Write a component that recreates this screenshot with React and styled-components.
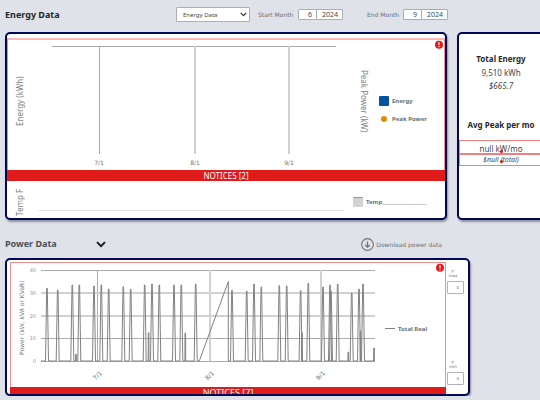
import React from "react";
import styled, { createGlobalStyle } from "styled-components";

const Global = createGlobalStyle`
  * { box-sizing: border-box; }
  body {
    margin: 0;
    background: #dfe2e9;
    color: #6b7075;
    font-family: "Noto Sans", "Open Sans", sans-serif;
    font-size: 8px;
    overflow: hidden;
  }
`;

const Page = styled.main`
  padding-left: 5px;
`;

const Header = styled.header`
  display: flex;
  align-items: center;
  height: ${(p) => (p.$tall ? 38 : 32)}px;
  padding-top: ${(p) => (p.$tall ? 10 : 0)}px;
  padding-bottom: ${(p) => (p.$tall ? 0 : 3)}px;
`;

const Title = styled.h2`
  margin: 0;
  width: ${(p) => p.$width}px;
  font-family: "Noto Sans", sans-serif;
  font-size: 9px;
  line-height: 14px;
  font-weight: 700;
  color: ${(p) => (p.$dark ? "#22272e" : "#4c5156")};
`;

const SelectWrap = styled.span`
  display: flex;
  position: relative;
  margin-right: 8px;

  svg {
    position: absolute;
    right: 3px;
    top: 5px;
    pointer-events: none;
  }
`;

const Select = styled.select`
  appearance: none;
  width: 74px;
  height: 15px;
  padding: 0 6px;
  border: 1px solid #aaaeb6;
  border-radius: 1px;
  background: #fff;
  color: #44484d;
  font: 6px "Noto Sans", sans-serif;
`;

const Field = styled.div`
  display: flex;
  align-items: center;
  margin-right: 24px;
`;

const FieldLabel = styled.label`
  width: ${(p) => p.$width}px;
  font: 6px "DejaVu Sans", sans-serif;
  white-space: nowrap;
`;

const DateInput = styled.input`
  width: ${(p) => (p.$wide ? 27 : 19)}px;
  height: 11px;
  margin-left: ${(p) => (p.$wide ? -1 : 0)}px;
  padding: 0 4px 0 0;
  border: 1px solid #a9adb6;
  border-radius: 1px;
  background: #fff;
  color: #44484d;
  font: 7px "Noto Sans", sans-serif;
  text-align: right;
`;

const CardRow = styled.div`
  display: grid;
  grid-template-columns: minmax(0, 1fr) 88px;
  gap: 10px;
  margin-right: -5px;
`;

const Card = styled.section`
  border: 2px solid #000958;
  border-radius: 5px;
  background: #fff;
  box-shadow: 1px 2px 2px #8f929b;
  overflow: hidden;
`;

const EnergyCard = styled(Card)`
  height: 188px;
  padding-top: 4px;
`;

const PowerCard = styled(Card)`
  display: grid;
  grid-template-columns: minmax(0, 1fr) 22px;
  height: 138px;
  margin-right: 70px;
  padding: 2px 0 0 3px;
`;

const NoticeFrame = styled.div`
  position: relative;
  border: 1px solid #f58c8c;
  border-bottom: 0;
  border-top-width: ${(p) => (p.$thickTop ? 2 : 1)}px;
  border-top-color: ${(p) => (p.$thickTop ? "#fab8b8" : "#f58c8c")};
`;

const Badge = styled.svg`
  position: absolute;
  top: 0;
  right: 1px;
  width: 8px;
  height: 9px;
`;

const NoticeBar = styled.div`
  height: 11px;
  background: #df1b1b;
  margin: 0 -1px;
  color: #fff;
  font-family: "Noto Sans", sans-serif;
  font-size: ${(p) => (p.$large ? 9 : 8)}px;
  line-height: 11px;
  text-align: center;
`;

const EnergyPlot = styled.div`
  display: grid;
  grid-template-columns: 30px minmax(0, 1fr) 34px 66px;
  height: 130px;
`;

const TempPlot = styled(EnergyPlot)`
  height: 37px;
  padding: 0 1px;
`;

const PowerPlot = styled.div`
  display: grid;
  grid-template-columns: 18px minmax(0, 1fr) 66px;
  height: 124px;
`;

const Plot = styled.svg`
  display: block;
  width: 100%;
  height: auto;
  overflow: visible;
  font-family: "DejaVu Sans", sans-serif;
  fill: #6b7075;
`;

const AxisLabel = styled.div`
  display: flex;
  align-items: center;
  justify-content: center;
  writing-mode: vertical-rl;
  transform: ${(p) => (p.$down ? "none" : "rotate(180deg)")};
  padding: ${(p) => p.$pad || "0"};
  font-family: ${(p) => (p.$small ? '"DejaVu Sans"' : '"Noto Sans"')}, sans-serif;
  font-size: ${(p) => (p.$small ? 6 : 8)}px;
  line-height: 12px;
  white-space: nowrap;
  color: #7a7f85;
`;

const Legend = styled.ul`
  display: flex;
  flex-direction: column;
  gap: 7px;
  margin: 0;
  padding: ${(p) => p.$top}px 0 0 ${(p) => p.$left || 0}px;
  list-style: none;
`;

const LegendItem = styled.li`
  display: flex;
  align-items: center;
  gap: 3px;
  height: 11px;
  font: 700 6px "Noto Sans", sans-serif;
  white-space: nowrap;
`;

const Swatch = styled.span`
  flex: none;
  width: ${(p) => (p.$dot ? 6 : 10)}px;
  height: ${(p) => (p.$dot ? 6 : p.$line ? 1 : 10)}px;
  margin: 0 ${(p) => (p.$dot ? 2 : 0)}px 0 ${(p) => (p.$dot ? 2 : 0)}px;
  border-radius: ${(p) => (p.$dot ? 3 : p.$line ? 0 : 1)}px;
  border-top: ${(p) => (p.$edge ? "1px solid #999" : "0")};
  background: ${(p) => p.$color};
`;

const TempLegend = styled(Legend)`
  grid-column: 3 / 5;
`;

const SummaryCard = styled(Card)`
  padding-top: 18px;
  font-family: "Noto Sans", sans-serif;
  text-align: center;
  white-space: nowrap;
`;

const SummaryTitle = styled.h3`
  margin: 0;
  font-size: 8px;
  line-height: 14px;
  font-weight: 700;
  color: #25292d;
`;

const Amount = styled.p`
  margin: 0;
  font-size: 8px;
  line-height: 14px;
  color: #44484d;
`;

const Cost = styled.p`
  margin: 0 0 27px;
  font-size: 8px;
  line-height: 11px;
  font-style: italic;
  color: #44484d;
`;

const ErrorValue = styled.p`
  position: relative;
  height: ${(p) => (p.$italic ? 12 : 14)}px;
  margin: ${(p) => (p.$italic ? 0 : 8)}px 0 0;
  border: 1px solid #f08080;
  color: #44484d;
  font-size: ${(p) => (p.$italic ? 7 : 8)}px;
  font-style: ${(p) => (p.$italic ? "italic" : "normal")};
  line-height: ${(p) => (p.$italic ? 10 : 15)}px;

  &::after {
    content: "";
    position: absolute;
    left: 50%;
    bottom: ${(p) => (p.$italic ? 2 : 0)}px;
    width: 3px;
    height: 3px;
    margin-left: -1px;
    border-radius: 2px;
    background: #e01010;
  }
`;

const ToggleButton = styled.button`
  display: flex;
  padding: 0;
  border: 0;
  background: none;
`;

const DownloadButton = styled.button`
  display: flex;
  align-items: center;
  gap: 2px;
  margin: 0 98px 0 auto;
  padding: 0;
  border: 0;
  background: none;
  color: #6b7075;
  font: 6px "DejaVu Sans", sans-serif;
  white-space: nowrap;
`;

const RangeFields = styled.div`
  display: flex;
  flex-direction: column;
  justify-content: space-between;
  height: 123px;
  padding: 6px 4px 0 1px;
`;

const RangeField = styled.label`
  display: flex;
  flex-direction: column;
  font: 4px "DejaVu Sans", sans-serif;
  line-height: 5px;
  text-align: center;

  span {
    width: 12px;
    margin-bottom: 3px;
  }
`;

const RangeInput = styled.input`
  width: 17px;
  height: 13px;
  padding: 0 4px;
  border: 1px solid #b0b3bb;
  border-radius: 1px;
  color: #6b7075;
  font: 4px "DejaVu Sans", sans-serif;
  text-align: right;
`;

const Chevron = ({ size, color, stroke }) => (
  <svg width={size} height={size * 0.7} viewBox="0 0 10 7" fill="none">
    <path d="M1 1.2 5 5.2 9 1.2" stroke={color} strokeWidth={stroke} />
  </svg>
);

const Alert = () => (
  <Badge viewBox="0 0 8 9">
    <circle cx="4" cy="4.7" r="4" fill="#df1b1b" />
    <path d="M4 2.2v3.1M4 6.2v1.1" stroke="#fff" strokeWidth="1.2" />
  </Badge>
);

// Spikes as [x, peak y]; the ramp between the two groups is an interval with no readings.
const BASE = 98;
const before = [
  [18, 25.3], [28.7, 27], [43.3, 22], [47, 91.3], [50.3, 22], [65, 23],
  [72.3, 22], [79.7, 26], [94.3, 23.7], [101.7, 26.3], [115.7, 22],
  [119.6, 69.7], [123, 21], [130.3, 22], [145, 22], [152.3, 22],
  [156.3, 70], [166.7, 21],
];
const after = [
  [203, 27.3], [217.7, 28], [225, 21], [232.3, 24], [250.3, 22.7],
  [257.7, 23], [271.6, 27.7], [273, 69.7], [279.3, 20.3], [294, 24],
  [301, 22], [302, 28], [308.7, 21], [319.3, 89], [322.7, 30], [330, 26],
  [331.5, 68], [334, 21], [345, 85],
];
const spikes = (points) =>
  points
    .map(([x, y]) => {
      const w = y > 60 ? 0.4 : 1.5;
      return `L${x - w} ${BASE}L${x - 0.3} ${y}L${x + 0.3} ${y}L${x + w} ${BASE}`;
    })
    .join("");
const series = `M12 ${BASE}${spikes(before)}L170.3 ${BASE}L199.3 18.7L199.3 ${BASE}${spikes(after)}`;

const EnergyChart = () => (
  <Plot viewBox="0 0 306 130">
    <path d="M14 6.5H298M61.5 6V114" stroke="#a5a7aa" fill="none" />
    <path d="M157 6V114M251 6V114" stroke="#cfd0d5" strokeWidth="2" />
    <g fontSize="6" textAnchor="middle">
      <text x="61" y="125">7/1</text>
      <text x="157" y="125">8/1</text>
      <text x="251" y="125">9/1</text>
    </g>
  </Plot>
);

const PowerChart = () => (
  <Plot viewBox="0 0 350 124">
    <path d="M12 7.5H346M12 75.5H346M12 98.5H346M68.5 7V98" stroke="#aaacb0" fill="none" />
    <path d="M12 30H346M12 53H346M181 7V98M292 7V98" stroke="#d0d1d6" strokeWidth="2" />
    <path d={series} stroke="#828282" strokeLinejoin="bevel" fill="none" />
    <g fontSize="5" textAnchor="end" fill="#92969b">
      <text x="7" y="9">40</text>
      <text x="7" y="32">30</text>
      <text x="7" y="55">20</text>
      <text x="7" y="77">10</text>
      <text x="7" y="100">0</text>
    </g>
    <g fontSize="6" textAnchor="middle">
      <text transform="translate(70 114) rotate(-45)">7/1</text>
      <text transform="translate(182 114) rotate(-45)">8/1</text>
      <text transform="translate(293 114) rotate(-45)">9/1</text>
    </g>
  </Plot>
);

export default function App() {
  return (
    <Page>
      <Global />
      <Header>
        <Title $dark $width={171}>Energy Data</Title>
        <SelectWrap>
          <Select aria-label="Data set" defaultValue="energy">
            <option value="energy">Energy Data</option>
          </Select>
          <Chevron size={7} color="#33373c" stroke={1.8} />
        </SelectWrap>
        <Field>
          <FieldLabel htmlFor="start-month" $width={40}>Start Month</FieldLabel>
          <DateInput id="start-month" defaultValue="6" />
          <DateInput $wide aria-label="Start year" defaultValue="2024" />
        </Field>
        <Field>
          <FieldLabel htmlFor="end-month" $width={36}>End Month</FieldLabel>
          <DateInput id="end-month" defaultValue="9" />
          <DateInput $wide aria-label="End year" defaultValue="2024" />
        </Field>
      </Header>

      <CardRow>
        <EnergyCard>
          <NoticeFrame $thickTop>
            <Alert />
            <EnergyPlot>
              <AxisLabel $pad="8px 0 0 6px">Energy (kWh)</AxisLabel>
              <EnergyChart />
              <AxisLabel $down $pad="0 0 8px 6px">Peak Power (kW)</AxisLabel>
              <Legend $top={55} $left={1}>
                <LegendItem><Swatch $color="#0453a3" />Energy</LegendItem>
                <LegendItem><Swatch $dot $color="#e58a0b" />Peak Power</LegendItem>
              </Legend>
            </EnergyPlot>
            <NoticeBar>NOTICES [2]</NoticeBar>
          </NoticeFrame>
          <TempPlot>
            <AxisLabel $pad="0 0 6px 6px">Temp F</AxisLabel>
            <Plot viewBox="0 0 306 37">
              <path d="M1 29.5H306" stroke="#e2e3e5" />
            </Plot>
            <TempLegend $top={15} $left={9}>
              <LegendItem><Swatch $edge $color="#d2d2d2" />Temp__________________</LegendItem>
            </TempLegend>
          </TempPlot>
        </EnergyCard>
        <SummaryCard>
          <SummaryTitle>Total Energy</SummaryTitle>
          <Amount>9,510 kWh</Amount>
          <Cost>$665.7</Cost>
          <SummaryTitle>Avg Peak per mo</SummaryTitle>
          <ErrorValue>null kW/mo</ErrorValue>
          <ErrorValue $italic>$null (total)</ErrorValue>
        </SummaryCard>
      </CardRow>

      <Header $tall>
        <Title $width={91}>Power Data</Title>
        <ToggleButton aria-label="Toggle power data">
          <Chevron size={10} color="#15181c" stroke={1.9} />
        </ToggleButton>
        <DownloadButton>
          <svg width="13" height="13" viewBox="0 0 13 13" fill="none" stroke="#707276">
            <circle cx="6.5" cy="6.5" r="5.9" strokeWidth="1.1" />
            <path d="M6.5 3.5V9M4.3 7l2.2 2.2L8.7 7" strokeWidth="1.2" />
          </svg>
          Download power data
        </DownloadButton>
      </Header>

      <PowerCard>
        <NoticeFrame>
          <Alert />
          <PowerPlot>
            <AxisLabel $small $pad="14px 4px 0 0">Power (kW, kVA or KVaR)</AxisLabel>
            <PowerChart />
            <Legend $top={60} $left={6}>
              <LegendItem><Swatch $line $color="#808080" />Total Real</LegendItem>
            </Legend>
          </PowerPlot>
          <NoticeBar $large>NOTICES [7]</NoticeBar>
        </NoticeFrame>
        <RangeFields>
          <RangeField>
            <span>y-<br />max</span>
            <RangeInput defaultValue="0" />
          </RangeField>
          <RangeField>
            <span>y-<br />min</span>
            <RangeInput defaultValue="0" />
          </RangeField>
        </RangeFields>
      </PowerCard>
    </Page>
  );
}
